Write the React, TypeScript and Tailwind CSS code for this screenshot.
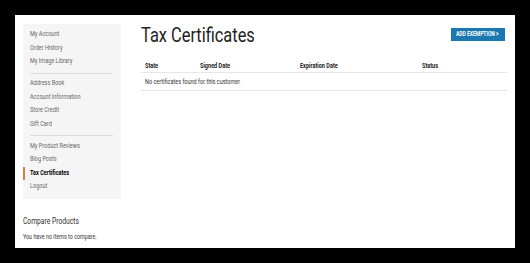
import React from "react";

const font = { fontFamily: 'Roboto, "Liberation Sans", sans-serif' };

function N({ children, s = "n" }: { children: React.ReactNode; s?: "n" | "t" }) {
  return (
    <span
      className={
        s === "t"
          ? "inline-block origin-left scale-x-[0.82] whitespace-nowrap"
          : "inline-block origin-left scale-x-[0.79] whitespace-nowrap"
      }
    >
      {children}
    </span>
  );
}

function Item({ label, active }: { label: string; active?: boolean }) {
  return (
    <div
      className={
        active
          ? "h-[13.5px] leading-[13.5px] pl-[5px] border-l-2 border-[#e07b39] text-black font-bold"
          : "h-[13.5px] leading-[13.5px] pl-[7px] text-[#666]"
      }
    >
      <N>{label}</N>
    </div>
  );
}

function Sep() {
  return <div className="ml-[7px] mr-[8px] mt-[4px] mb-[3.5px] h-px bg-[#dcdcdc]" />;
}

export default function App() {
  return (
    <div className="w-[530px] h-[263px] bg-black p-[15px]" style={font}>
      <div className="w-[500px] h-[233px] bg-white flex px-[8px] pt-[9px] gap-[20px]">
        <div className="w-[98px] shrink-0 flex flex-col">
          <div className="bg-[#f5f5f5] pt-[4px] pb-[5px] text-[7px]">
            <Item label="My Account" />
            <Item label="Order History" />
            <Item label="My Image Library" />
            <Sep />
            <Item label="Address Book" />
            <Item label="Account Information" />
            <Item label="Store Credit" />
            <Item label="Gift Card" />
            <Sep />
            <Item label="My Product Reviews" />
            <Item label="Blog Posts" />
            <Item label="Tax Certificates" active />
            <Item label="Logout" />
          </div>
          <div className="mt-[16px] text-[8.5px] leading-[12px] text-[#333]">
            <N>Compare Products</N>
          </div>
          <div className="mt-[5px] text-[6.8px] leading-[10px] text-[#333]">
            <N>You have no items to compare.</N>
          </div>
        </div>
        <div className="flex-1 flex flex-col">
          <div className="flex items-start justify-between">
            <h1 className="text-[20px] leading-[22px] text-[#222]">
              <N s="t">Tax Certificates</N>
            </h1>
            <div className="mt-[4px] mr-[2px] h-[13px] w-[54px] pl-[5px] bg-[#1b78b2] text-white font-bold text-[6.3px] leading-[13px] overflow-hidden">
              <N>ADD EXEMPTION &gt;</N>
            </div>
          </div>
          <div className="mt-[14px] text-[7px] text-[#222]">
            <div className="grid grid-cols-[55px_100px_122px_1fr] h-[13px] leading-[13px] font-bold border-b border-[#e6e6e6]">
              <div className="pl-[4px]"><N>State</N></div>
              <div className="pl-[4px]"><N>Signed Date</N></div>
              <div className="pl-[4px]"><N>Expiration Date</N></div>
              <div className="pl-[4px]"><N>Status</N></div>
            </div>
            <div className="h-[18px] leading-[18px] pl-[4px] border-b border-[#e6e6e6] text-[#333]">
              <N>No certificates found for this customer</N>
            </div>
          </div>
        </div>
      </div>
    </div>
  );
}
